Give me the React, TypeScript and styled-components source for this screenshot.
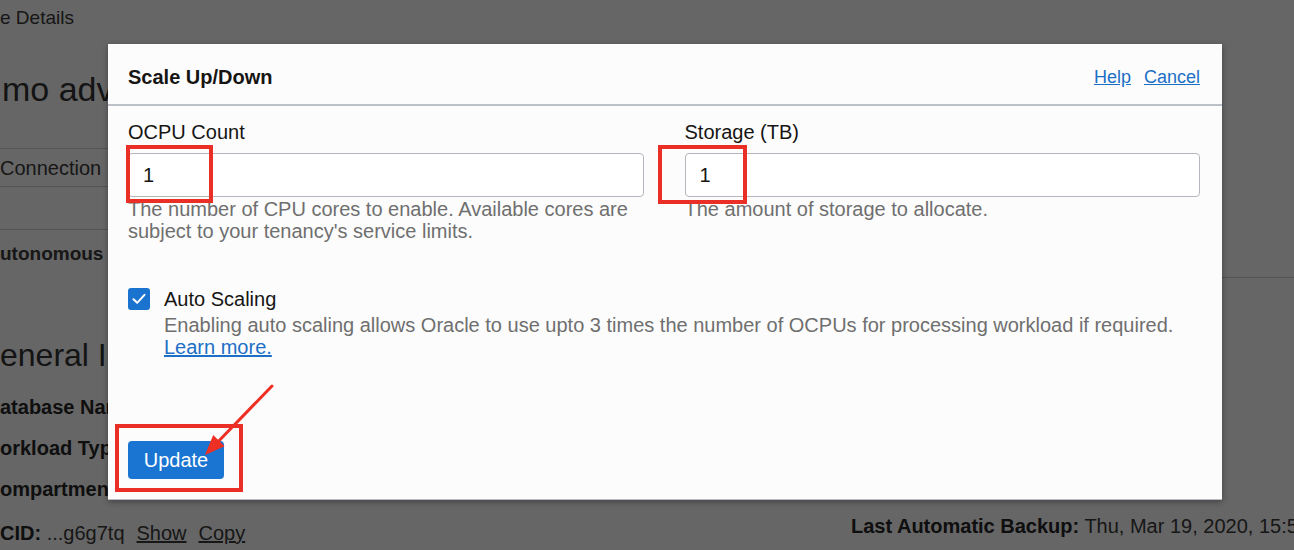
import React from "react";
import styled, { createGlobalStyle } from "styled-components";

const Global = createGlobalStyle`
  html, body { margin: 0; padding: 0; background: #ffffff; }
  body { font-family: "Liberation Sans", Arial, sans-serif; font-size: 20px; color: #161513; }
  * { box-sizing: border-box; }
`;

const Screen = styled.div`
  position: relative;
  width: 1294px;
  height: 550px;
  overflow: hidden;
  background: #ffffff;
`;

/* ---------- background page ---------- */
const Page = styled.div`
  display: flex;
  flex-direction: column;
  padding-top: 7px;
  color: #3a3a3a;
`;

const Breadcrumb = styled.div`
  line-height: 22px;
  font-size: 19px;
`;

const PageTitle = styled.h1`
  margin: 38px 0 0 2px;
  font-size: 34px;
  line-height: 44px;
  font-weight: 400;
  color: #333;
`;

const TabBar = styled.div`
  margin-top: 37px;
  width: 400px;
  height: 39px;
  border-top: 1px solid #d0d0d0;
  border-bottom: 1px solid #d0d0d0;
  display: flex;
  align-items: center;
  padding-top: 2px;
`;

const SubNav = styled.div`
  margin-top: 42px;
  display: flex;
  height: 49px;
`;

const SubNavLeft = styled.div`
  width: 400px;
  border-top: 1px solid #d0d0d0;
  padding-top: 13px;
  line-height: 22px;
  font-size: 19px;
  font-weight: 700;
`;

const SubNavRight = styled.div`
  flex: 1;
  border-bottom: 1px solid #d0d0d0;
`;

const SectionTitle = styled.h2`
  margin: 59px 0 0 0;
  font-size: 32px;
  line-height: 36px;
  font-weight: 400;
  color: #333;
`;

const InfoGrid = styled.div`
  margin-top: 23px;
  display: flex;
`;

const InfoColumn = styled.div<{ $width?: number; $top?: number }>`
  display: flex;
  flex-direction: column;
  flex: none;
  gap: 19px;
  width: ${(p) => (p.$width ? `${p.$width}px` : "auto")};
  padding-top: ${(p) => p.$top ?? 0}px;
`;

const InfoRow = styled.div<{ $extra?: number }>`
  line-height: 22px;
  white-space: nowrap;
  margin-top: ${(p) => p.$extra ?? 0}px;
`;

const Key = styled.b`
  font-weight: 700;
  color: #262626;
`;

const PageLink = styled.span`
  text-decoration: underline;
  margin-left: 12px;
`;

const Dim = styled.div`
  position: absolute;
  inset: 0;
  background: rgba(0, 0, 0, 0.6);
`;

/* ---------- dialog ---------- */
const Dialog = styled.div`
  position: absolute;
  left: 108px;
  top: 44px;
  width: 1114px;
  background: #fcfcfc;
  border-bottom: 1px solid #b9bcc2;
  box-shadow: 0 2px 6px rgba(0, 0, 0, 0.35);
  display: flex;
  flex-direction: column;
`;

const DialogHeader = styled.div`
  display: flex;
  align-items: center;
  justify-content: space-between;
  padding: 22px 22px 16px 20px;
  line-height: 22px;
  border-bottom: 2px solid #bcc1c8;
`;

const DialogTitle = styled.h3`
  margin: 0;
  font-size: 20px;
  font-weight: 700;
  color: #161513;
`;

const HeaderLinks = styled.div`
  display: flex;
  gap: 13px;
  font-size: 18px;
`;

const Link = styled.a`
  color: #1c6fc6;
  text-decoration: underline;
  cursor: pointer;
`;

const DialogBody = styled.div`
  padding: 15px 22px 20px 20px;
  display: flex;
  flex-direction: column;
`;

const FieldRow = styled.div`
  display: grid;
  grid-template-columns: 1fr 1fr;
  column-gap: 41px;
`;

const Field = styled.div`
  display: flex;
  flex-direction: column;
`;

const Label = styled.label`
  line-height: 22px;
  color: #161513;
`;

const InputWrap = styled.div`
  position: relative;
  margin-top: 10px;
`;

const Input = styled.input`
  width: 100%;
  height: 44px;
  border: 1px solid #b3b7bd;
  border-radius: 4px;
  background: #ffffff;
  padding: 0 14px;
  font-family: inherit;
  font-size: 20px;
  color: #161513;
  outline: none;
`;

const Hint = styled.div`
  margin-top: 1px;
  line-height: 22px;
  color: #6f6f6f;
`;

const Highlight = styled.div<{ $l: number; $t: number; $w: number; $h: number }>`
  position: absolute;
  left: ${(p) => p.$l}px;
  top: ${(p) => p.$t}px;
  width: ${(p) => p.$w}px;
  height: ${(p) => p.$h}px;
  border: 4px solid #ea2f27;
  pointer-events: none;
`;

const CheckRow = styled.div`
  margin-top: 46px;
  display: flex;
  gap: 14px;
  align-items: flex-start;
`;

const CheckBox = styled.span`
  width: 22px;
  height: 22px;
  border-radius: 3px;
  background: #1a73cf;
  display: flex;
  align-items: center;
  justify-content: center;
  flex: none;
`;

const CheckText = styled.div`
  display: flex;
  flex-direction: column;
  line-height: 22px;
`;

const CheckLabel = styled.div`
  color: #161513;
  margin-bottom: 3px;
`;

const Footer = styled.div`
  margin-top: 83px;
  position: relative;
  align-self: flex-start;
`;

const PrimaryButton = styled.button`
  height: 38px;
  width: 96px;
  padding: 0;
  border: none;
  border-radius: 4px;
  background: #1a75d2;
  color: #ffffff;
  font-family: inherit;
  font-size: 20px;
  display: block;
`;

const Arrow = styled.svg`
  position: absolute;
  left: 67px;
  top: -60px;
  width: 85px;
  height: 85px;
  overflow: visible;
  pointer-events: none;
`;

export default function App() {
  return (
    <Screen>
      <Global />
      <Page>
        <Breadcrumb>e Details</Breadcrumb>
        <PageTitle>mo adv</PageTitle>
        <TabBar>Connection</TabBar>
        <SubNav>
          <SubNavLeft>utonomous</SubNavLeft>
          <SubNavRight />
        </SubNav>
        <SectionTitle>eneral I</SectionTitle>
        <InfoGrid>
          <InfoColumn $width={851}>
            <InfoRow><Key>atabase Name:</Key></InfoRow>
            <InfoRow><Key>orkload Type:</Key></InfoRow>
            <InfoRow><Key>ompartment:</Key></InfoRow>
            <InfoRow $extra={3}>
              <Key>CID:</Key> ...g6g7tq<PageLink>Show</PageLink><PageLink>Copy</PageLink>
            </InfoRow>
          </InfoColumn>
          <InfoColumn $top={119}>
            <InfoRow>
              <Key>Last Automatic Backup:</Key> Thu, Mar 19, 2020, 15:55:12 UTC
            </InfoRow>
          </InfoColumn>
        </InfoGrid>
      </Page>
      <Dim />

      <Dialog>
        <DialogHeader>
          <DialogTitle>Scale Up/Down</DialogTitle>
          <HeaderLinks>
            <Link>Help</Link>
            <Link>Cancel</Link>
          </HeaderLinks>
        </DialogHeader>
        <DialogBody>
          <FieldRow>
            <Field>
              <Label>OCPU Count</Label>
              <InputWrap>
                <Input defaultValue="1" />
                <Highlight $l={-2} $t={-8} $w={87} $h={58} />
              </InputWrap>
              <Hint>
                The number of CPU cores to enable. Available cores are
                <br />
                subject to your tenancy's service limits.
              </Hint>
            </Field>
            <Field>
              <Label>Storage (TB)</Label>
              <InputWrap>
                <Input defaultValue="1" />
                <Highlight $l={-27} $t={-8} $w={89} $h={59} />
              </InputWrap>
              <Hint>The amount of storage to allocate.</Hint>
            </Field>
          </FieldRow>

          <CheckRow>
            <CheckBox>
              <svg width="14" height="12" viewBox="0 0 14 12">
                <path d="M1.5 6.2 L5.2 9.8 L12.5 1.8" fill="none" stroke="#ffffff" strokeWidth="2" strokeLinecap="round" strokeLinejoin="round" />
              </svg>
            </CheckBox>
            <CheckText>
              <CheckLabel>Auto Scaling</CheckLabel>
              <Hint>
                Enabling auto scaling allows Oracle to use upto 3 times the number of OCPUs for processing workload if required.
              </Hint>
              <Link>Learn more.</Link>
            </CheckText>
          </CheckRow>

          <Footer>
            <PrimaryButton>Update</PrimaryButton>
            <Highlight $l={-13} $t={-17} $w={128} $h={68} />
            <Arrow viewBox="0 0 85 85">
              <line x1="77" y1="5" x2="24" y2="59.7" stroke="#ee3024" strokeWidth="3" strokeLinecap="round" />
              <polygon points="10,74 29.6,65.3 18.2,54.1" fill="#ee3024" />
            </Arrow>
          </Footer>
        </DialogBody>
      </Dialog>
    </Screen>
  );
}
